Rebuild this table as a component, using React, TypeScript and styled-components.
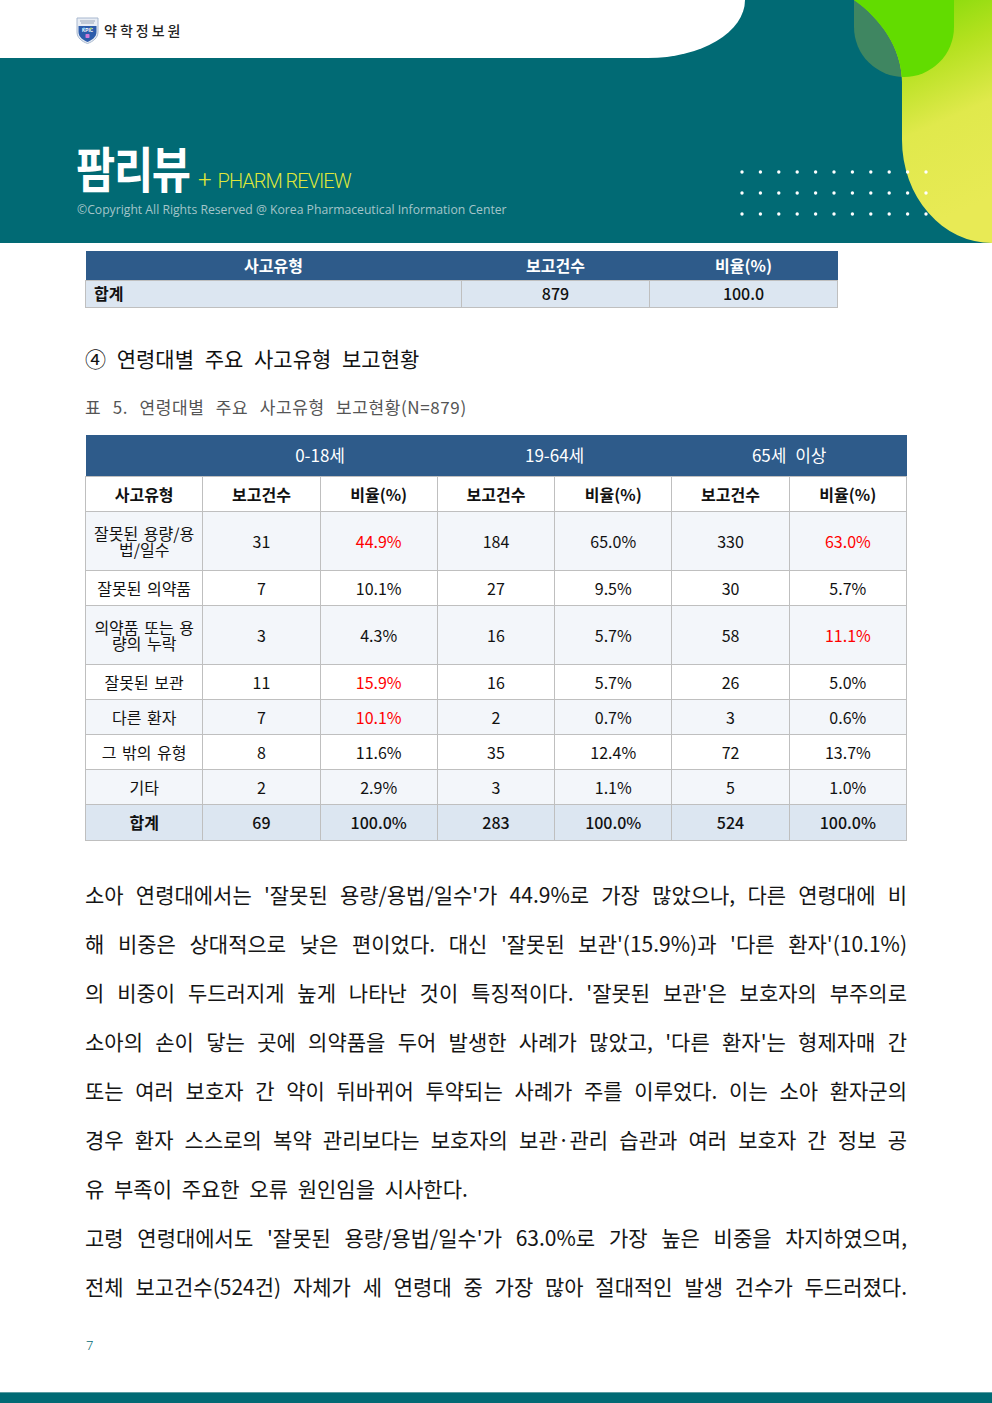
import React from "react";
import styled, { createGlobalStyle } from "styled-components";

const GlobalStyle = createGlobalStyle`
  html, body { margin: 0; padding: 0; background: #fff; }
  body { font-family: "Noto Sans CJK KR", "Noto Sans", sans-serif; }
  * { box-sizing: border-box; }
`;

const TEAL = "#016a74";
const NAVY = "#2e5b8a";
const LINE = "#bfbfbf";

const Page = styled.div`
  position: relative;
  width: 992px;
  min-height: 1403px;
  display: flex;
  flex-direction: column;
  background: #fff;
  overflow: hidden;
`;

const Header = styled.header`
  position: relative;
  height: 243px;
  flex-shrink: 0;
  background: ${TEAL};
  display: flex;
  flex-direction: column;
`;

const TopBar = styled.div`
  width: 745px;
  height: 58px;
  background: #fff;
  border-bottom-right-radius: 97px 58px;
  display: flex;
  align-items: center;
  gap: 5px;
  padding-left: 76px;
  padding-top: 2px;
`;

const OrgName = styled.span`
  font-family: "Noto Sans CJK KR", sans-serif;
  font-size: 14px;
  font-weight: 500;
  letter-spacing: 3px;
  color: #222;
`;

const TitleRow = styled.div`
  display: flex;
  align-items: baseline;
  margin-top: 85px;
  padding-left: 76px;
  position: relative;
  z-index: 1;
`;

const Title = styled.h1`
  margin: 0;
  display: inline-block;
  width: 120px;
  white-space: nowrap;
  font-family: "Noto Sans CJK KR", sans-serif;
  font-size: 49px;
  line-height: 48px;
  font-weight: 700;
  color: #fff;
  letter-spacing: -1.5px;
  transform: scaleX(0.87);
  transform-origin: left center;
`;

const SubTitle = styled.span`
  font-family: "Roboto", sans-serif;
  font-weight: 300;
  font-size: 20px;
  letter-spacing: -1px;
  color: #dfe63a;
  margin-left: 2px;
`;

const Plus = styled.span`
  font-size: 24px;
  font-weight: 300;
  margin-right: 7px;
`;

const Copyright = styled.div`
  margin-top: 8px;
  padding-left: 77px;
  font-family: "Open Sans", sans-serif;
  font-size: 12.2px;
  line-height: 16px;
  color: #a4c5c9;
  position: relative;
  z-index: 1;
`;

const Decoration = styled.svg`
  position: absolute;
  left: 600px;
  top: 0;
  width: 392px;
  height: 243px;
`;

const Content = styled.main`
  padding: 8px 85px 0 85px;
  display: flex;
  flex-direction: column;
`;

const Table = styled.table<{ $width: number }>`
  width: ${(p) => p.$width}px;
  border-collapse: collapse;
  table-layout: fixed;
  font-family: "Noto Sans CJK KR", sans-serif;
  color: #111;
  word-spacing: 2px;
`;

const HeadCell = styled.th<{ $h: number; $size: number; $weight: number }>`
  background: ${NAVY};
  color: #fff;
  height: ${(p) => p.$h}px;
  font-size: ${(p) => p.$size}px;
  font-weight: ${(p) => p.$weight};
  line-height: 18px;
  padding: 0;
  text-align: center;
  word-spacing: 5px;
`;

const SubHeadCell = styled.th`
  background: #fff;
  height: 35px;
  border: 1px solid ${LINE};
  font-size: 16px;
  font-weight: 700;
  line-height: 18px;
  padding: 0;
`;

const Cell = styled.td<{
  $bg: string;
  $h: number;
  $red?: boolean;
  $weight?: number;
  $align?: string;
}>`
  background: ${(p) => p.$bg};
  height: ${(p) => p.$h}px;
  border: 1px solid ${LINE};
  font-size: 16px;
  line-height: 16.5px;
  font-weight: ${(p) => p.$weight ?? 400};
  color: ${(p) => (p.$red ? "#ff0000" : "#111")};
  text-align: ${(p) => p.$align ?? "center"};
  padding: 0 ${(p) => (p.$align === "left" ? "8px" : "4px")};
  vertical-align: middle;
`;

const SectionTitle = styled.h2`
  margin: 35px 0 0 0;
  font-family: "Noto Sans CJK KR", sans-serif;
  font-size: 21px;
  line-height: 30px;
  font-weight: 400;
  color: #111;
  word-spacing: 6px;
`;

const Caption = styled.div`
  margin: 22px 0 16px 0;
  font-family: "Noto Sans CJK KR", sans-serif;
  font-size: 17px;
  line-height: 24px;
  color: #555;
  letter-spacing: 0.6px;
  word-spacing: 7px;
`;

const Body = styled.div`
  margin-top: 29px;
  font-family: "Noto Sans CJK KR", sans-serif;
  font-size: 21px;
  line-height: 49px;
  color: #151515;
  word-spacing: 5px;
`;

const Line = styled.span<{ $last?: boolean }>`
  display: block;
  text-align: justify;
  text-align-last: ${(p) => (p.$last ? "left" : "justify")};
`;

const PageNum = styled.div`
  margin-top: 24px;
  padding-left: 86px;
  font-family: "Noto Sans", sans-serif;
  font-size: 13px;
  font-weight: 300;
  line-height: 20px;
  color: ${TEAL};
`;

const FooterBar = styled.footer`
  margin-top: auto;
  height: 11px;
  background: ${TEAL};
  border-top: 1px solid #5b9ca2;
`;

const Logo = () => (
  <svg width="23" height="27" viewBox="0 0 23 27">
    <path
      d="M1 1 H22 V15 C22 21 17 24.5 11.5 26.5 C6 24.5 1 21 1 15 Z"
      fill="#e8edf4"
      stroke="#a8b8cf"
      strokeWidth="1"
    />
    <rect x="4" y="3.5" width="15" height="1" fill="#9aa8ba" />
    <rect x="5" y="5.5" width="13" height="1" fill="#9aa8ba" />
    <path
      d="M2.5 9 H20.5 V15 C20.5 20 16 23 11.5 25 C7 23 2.5 20 2.5 15 Z"
      fill="#2c5cab"
    />
    <text
      x="11.5"
      y="15"
      fontSize="4.6"
      fontFamily="Liberation Sans, sans-serif"
      fontWeight="700"
      fill="#fff"
      textAnchor="middle"
    >
      KPIC
    </text>
    <circle cx="8" cy="11.5" r="1" fill="#7ed0ff" />
    <circle cx="15" cy="11.5" r="1" fill="#9ad86a" />
    <rect x="9.5" y="17" width="4" height="4" rx="0.8" fill="#d27ad6" />
  </svg>
);

const DecorationArt = () => {
  const dots: React.ReactElement[] = [];
  for (let r = 0; r < 3; r++) {
    for (let c = 0; c < 11; c++) {
      dots.push(
        <circle key={`${r}-${c}`} cx={742 + c * 18.4} cy={172 + r * 21} r={1.7} fill="#fff" />
      );
    }
  }
  const big =
    "M854 0 C880 18 902 48 902 82 V140 A90 103 0 0 0 992 243 V0 Z";
  const small = "M854 0 V27 A50 50 0 0 0 954 27 V0 Z";
  return (
    <Decoration viewBox="600 0 392 243" preserveAspectRatio="none">
      <defs>
        <linearGradient id="g" x1="0" y1="0" x2="0.25" y2="1">
          <stop offset="0%" stopColor="#6ed800" />
          <stop offset="35%" stopColor="#b4e11f" />
          <stop offset="62%" stopColor="#e0e94c" />
          <stop offset="100%" stopColor="#e8ea55" />
        </linearGradient>
        <clipPath id="bigClip">
          <path d={big} />
        </clipPath>
      </defs>
      <path d={small} fill="#3f8661" />
      <path d={big} fill="url(#g)" />
      <path d={small} fill="#62dc00" clipPath="url(#bigClip)" />
      {dots}
    </Decoration>
  );
};

type Row = {
  label: string;
  vals: [string, string, boolean, string, string, boolean, string, string, boolean];
  tall?: boolean;
};

const rows: Row[] = [
  { label: "잘못된 용량/용법/일수", vals: ["31", "44.9%", true, "184", "65.0%", false, "330", "63.0%", true], tall: true },
  { label: "잘못된 의약품", vals: ["7", "10.1%", false, "27", "9.5%", false, "30", "5.7%", false] },
  { label: "의약품 또는 용량의 누락", vals: ["3", "4.3%", false, "16", "5.7%", false, "58", "11.1%", true], tall: true },
  { label: "잘못된 보관", vals: ["11", "15.9%", true, "16", "5.7%", false, "26", "5.0%", false] },
  { label: "다른 환자", vals: ["7", "10.1%", true, "2", "0.7%", false, "3", "0.6%", false] },
  { label: "그 밖의 유형", vals: ["8", "11.6%", false, "35", "12.4%", false, "72", "13.7%", false] },
  { label: "기타", vals: ["2", "2.9%", false, "3", "1.1%", false, "5", "1.0%", false] },
];

const lines: { text: string; last?: boolean }[] = [
  { text: "소아 연령대에서는 '잘못된 용량/용법/일수'가 44.9%로 가장 많았으나, 다른 연령대에 비" },
  { text: "해 비중은 상대적으로 낮은 편이었다. 대신 '잘못된 보관'(15.9%)과 '다른 환자'(10.1%)" },
  { text: "의 비중이 두드러지게 높게 나타난 것이 특징적이다. '잘못된 보관'은 보호자의 부주의로" },
  { text: "소아의 손이 닿는 곳에 의약품을 두어 발생한 사례가 많았고, '다른 환자'는 형제자매 간" },
  { text: "또는 여러 보호자 간 약이 뒤바뀌어 투약되는 사례가 주를 이루었다. 이는 소아 환자군의" },
  { text: "경우 환자 스스로의 복약 관리보다는 보호자의 보관·관리 습관과 여러 보호자 간 정보 공" },
  { text: "유 부족이 주요한 오류 원인임을 시사한다.", last: true },
  { text: "고령 연령대에서도 '잘못된 용량/용법/일수'가 63.0%로 가장 높은 비중을 차지하였으며," },
  { text: "전체 보고건수(524건) 자체가 세 연령대 중 가장 많아 절대적인 발생 건수가 두드러졌다." },
];

export default function App() {
  return (
    <>
      <GlobalStyle />
      <Page>
        <Header>
          <DecorationArt />
          <TopBar>
            <Logo />
            <OrgName>약학정보원</OrgName>
          </TopBar>
          <TitleRow>
            <Title>팜리뷰</Title>
            <SubTitle>
              <Plus>+</Plus>PHARM REVIEW
            </SubTitle>
          </TitleRow>
          <Copyright>©Copyright All Rights Reserved @ Korea Pharmaceutical Information Center</Copyright>
        </Header>

        <Content>
          <Table $width={752}>
            <colgroup>
              <col style={{ width: 376 }} />
              <col style={{ width: 188 }} />
              <col style={{ width: 188 }} />
            </colgroup>
            <thead>
              <tr>
                <HeadCell $h={29} $size={16} $weight={700}>사고유형</HeadCell>
                <HeadCell $h={29} $size={16} $weight={700}>보고건수</HeadCell>
                <HeadCell $h={29} $size={16} $weight={700}>비율(%)</HeadCell>
              </tr>
            </thead>
            <tbody>
              <tr>
                <Cell $bg="#dce6f1" $h={27} $weight={700} $align="left">합계</Cell>
                <Cell $bg="#dce6f1" $h={27} $weight={500}>879</Cell>
                <Cell $bg="#dce6f1" $h={27} $weight={500}>100.0</Cell>
              </tr>
            </tbody>
          </Table>

          <SectionTitle>④ 연령대별 주요 사고유형 보고현황</SectionTitle>
          <Caption>표 5. 연령대별 주요 사고유형 보고현황(N=879)</Caption>

          <Table $width={822}>
            <thead>
              <tr>
                <HeadCell $h={42} $size={17} $weight={400} />
                <HeadCell $h={42} $size={17} $weight={400} colSpan={2}>0-18세</HeadCell>
                <HeadCell $h={42} $size={17} $weight={400} colSpan={2}>19-64세</HeadCell>
                <HeadCell $h={42} $size={17} $weight={400} colSpan={2}>65세 이상</HeadCell>
              </tr>
              <tr>
                <SubHeadCell>사고유형</SubHeadCell>
                <SubHeadCell>보고건수</SubHeadCell>
                <SubHeadCell>비율(%)</SubHeadCell>
                <SubHeadCell>보고건수</SubHeadCell>
                <SubHeadCell>비율(%)</SubHeadCell>
                <SubHeadCell>보고건수</SubHeadCell>
                <SubHeadCell>비율(%)</SubHeadCell>
              </tr>
            </thead>
            <tbody>
              {rows.map((r, i) => {
                const bg = i % 2 === 0 ? "#f3f6fa" : "#ffffff";
                const h = r.tall ? 59 : 35;
                const v = r.vals;
                return (
                  <tr key={r.label}>
                    <Cell $bg={bg} $h={h}>{r.label}</Cell>
                    <Cell $bg={bg} $h={h}>{v[0]}</Cell>
                    <Cell $bg={bg} $h={h} $red={v[2] as boolean}>{v[1]}</Cell>
                    <Cell $bg={bg} $h={h}>{v[3]}</Cell>
                    <Cell $bg={bg} $h={h} $red={v[5] as boolean}>{v[4]}</Cell>
                    <Cell $bg={bg} $h={h}>{v[6]}</Cell>
                    <Cell $bg={bg} $h={h} $red={v[8] as boolean}>{v[7]}</Cell>
                  </tr>
                );
              })}
              <tr>
                <Cell $bg="#dce6f1" $h={36} $weight={700}>합계</Cell>
                <Cell $bg="#dce6f1" $h={36} $weight={500}>69</Cell>
                <Cell $bg="#dce6f1" $h={36} $weight={500}>100.0%</Cell>
                <Cell $bg="#dce6f1" $h={36} $weight={500}>283</Cell>
                <Cell $bg="#dce6f1" $h={36} $weight={500}>100.0%</Cell>
                <Cell $bg="#dce6f1" $h={36} $weight={500}>524</Cell>
                <Cell $bg="#dce6f1" $h={36} $weight={500}>100.0%</Cell>
              </tr>
            </tbody>
          </Table>

          <Body>
            {lines.map((l, i) => (
              <Line key={i} $last={l.last}>
                {l.text}
              </Line>
            ))}
          </Body>
        </Content>

        <PageNum>7</PageNum>
        <FooterBar />
      </Page>
    </>
  );
}
